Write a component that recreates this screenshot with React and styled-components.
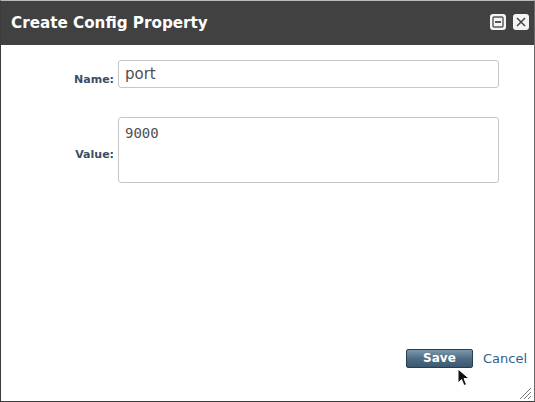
import styled, { createGlobalStyle } from "styled-components";

const Global = createGlobalStyle`
  html, body {
    margin: 0;
    padding: 0;
    background: #fff;
  }
  body {
    font-family: "DejaVu Sans", "Liberation Sans", sans-serif;
  }
`;

const Dialog = styled.div`
  position: relative;
  box-sizing: border-box;
  width: 535px;
  height: 402px;
  display: flex;
  flex-direction: column;
  border-top: 1px solid #b9b9b9;
  border-left: 1px solid #3c3c3c;
  border-right: 1px solid #6a6a6a;
  border-bottom: 1px solid #3c3c3c;
  background: #fff;
`;

const TitleBar = styled.div`
  height: 44px;
  flex: none;
  display: flex;
  align-items: center;
  justify-content: space-between;
  padding: 0 0 0 10px;
  background: #414141;
`;

const Title = styled.h1`
  margin: 0;
  font-size: 15.2px;
  font-weight: bold;
  color: #fff;
`;

const Tools = styled.div`
  display: flex;
  gap: 7px;
  margin-right: 5px;
  margin-top: -2px;
`;

const ToolButton = styled.button`
  width: 16px;
  height: 16px;
  padding: 0;
  border: none;
  border-radius: 3px;
  background: #f4f4f4;
  display: flex;
  align-items: center;
  justify-content: center;
`;

const Body = styled.div`
  flex: 1;
  display: flex;
  flex-direction: column;
  padding-top: 15px;
`;

const Form = styled.div`
  display: grid;
  grid-template-columns: 113px 381px;
  column-gap: 4px;
  row-gap: 29px;
  align-items: center;
`;

const Label = styled.label`
  text-align: right;
  font-size: 11px;
  font-weight: bold;
  color: #3b4e66;
  padding-top: ${(p) => p.offset || 0}px;
`;

const Input = styled.input`
  box-sizing: border-box;
  width: 381px;
  height: 28px;
  padding: 0 6px;
  border: 1px solid #c6c6c6;
  border-radius: 3px;
  font-family: "DejaVu Sans", sans-serif;
  font-size: 15px;
  color: #505050;
  outline: none;
`;

const TextArea = styled.textarea`
  box-sizing: border-box;
  width: 381px;
  height: 66px;
  padding: 7px 6px;
  border: 1px solid #c6c6c6;
  border-radius: 3px;
  font-family: "DejaVu Sans Mono", monospace;
  font-size: 14px;
  color: #505050;
  resize: none;
  outline: none;
`;

const Footer = styled.div`
  margin-top: auto;
  display: flex;
  justify-content: flex-end;
  align-items: center;
  gap: 10px;
  padding: 0 7px 33px 0;
`;

const SaveButton = styled.button`
  box-sizing: border-box;
  width: 67px;
  height: 19px;
  padding: 0;
  border: 1px solid #2b3d4d;
  border-radius: 2px;
  background: linear-gradient(#7c98ad, #4f6d85 50%, #3b5870);
  color: #fff;
  font-family: "DejaVu Sans", sans-serif;
  font-size: 12px;
  font-weight: bold;
  line-height: 17px;
`;

const CancelLink = styled.a`
  font-size: 13px;
  color: #2f5f8f;
  text-decoration: none;
`;

const Cursor = styled.svg`
  position: absolute;
  left: 456px;
  top: 367px;
`;

const Grip = styled.svg`
  position: absolute;
  right: 2px;
  bottom: 1px;
`;

export default function App() {
  return (
    <>
      <Global />
      <Dialog>
        <TitleBar>
          <Title>Create Config Property</Title>
          <Tools>
            <ToolButton aria-label="maximize">
              <svg width="12" height="12" viewBox="0 0 12 12">
                <rect x="1" y="1" width="10" height="10" rx="1" fill="none" stroke="#555" strokeWidth="1.4" />
                <rect x="3" y="5" width="6" height="2" fill="#555" />
              </svg>
            </ToolButton>
            <ToolButton aria-label="close">
              <svg width="12" height="12" viewBox="0 0 12 12">
                <path d="M2 2L10 10M10 2L2 10" stroke="#444" strokeWidth="1.5" />
              </svg>
            </ToolButton>
          </Tools>
        </TitleBar>
        <Body>
          <Form>
            <Label offset={10}>Name:</Label>
            <Input defaultValue="port" />
            <Label offset={9}>Value:</Label>
            <TextArea defaultValue="9000" />
          </Form>
          <Footer>
            <SaveButton>Save</SaveButton>
            <CancelLink href="#">Cancel</CancelLink>
          </Footer>
        </Body>
        <Grip width="13" height="13" viewBox="0 0 13 13">
          <path d="M1 12L12 1M5 12L12 5M9 12L12 9" stroke="#777" strokeWidth="1" />
        </Grip>
        <Cursor width="14" height="20" viewBox="0 0 14 20">
          <path d="M1 1L1 15L4.5 11.5L7 17.5L9.5 16.5L7 10.5L12 10.5Z" fill="#111" stroke="#fff" strokeWidth="1" />
        </Cursor>
      </Dialog>
    </>
  );
}
